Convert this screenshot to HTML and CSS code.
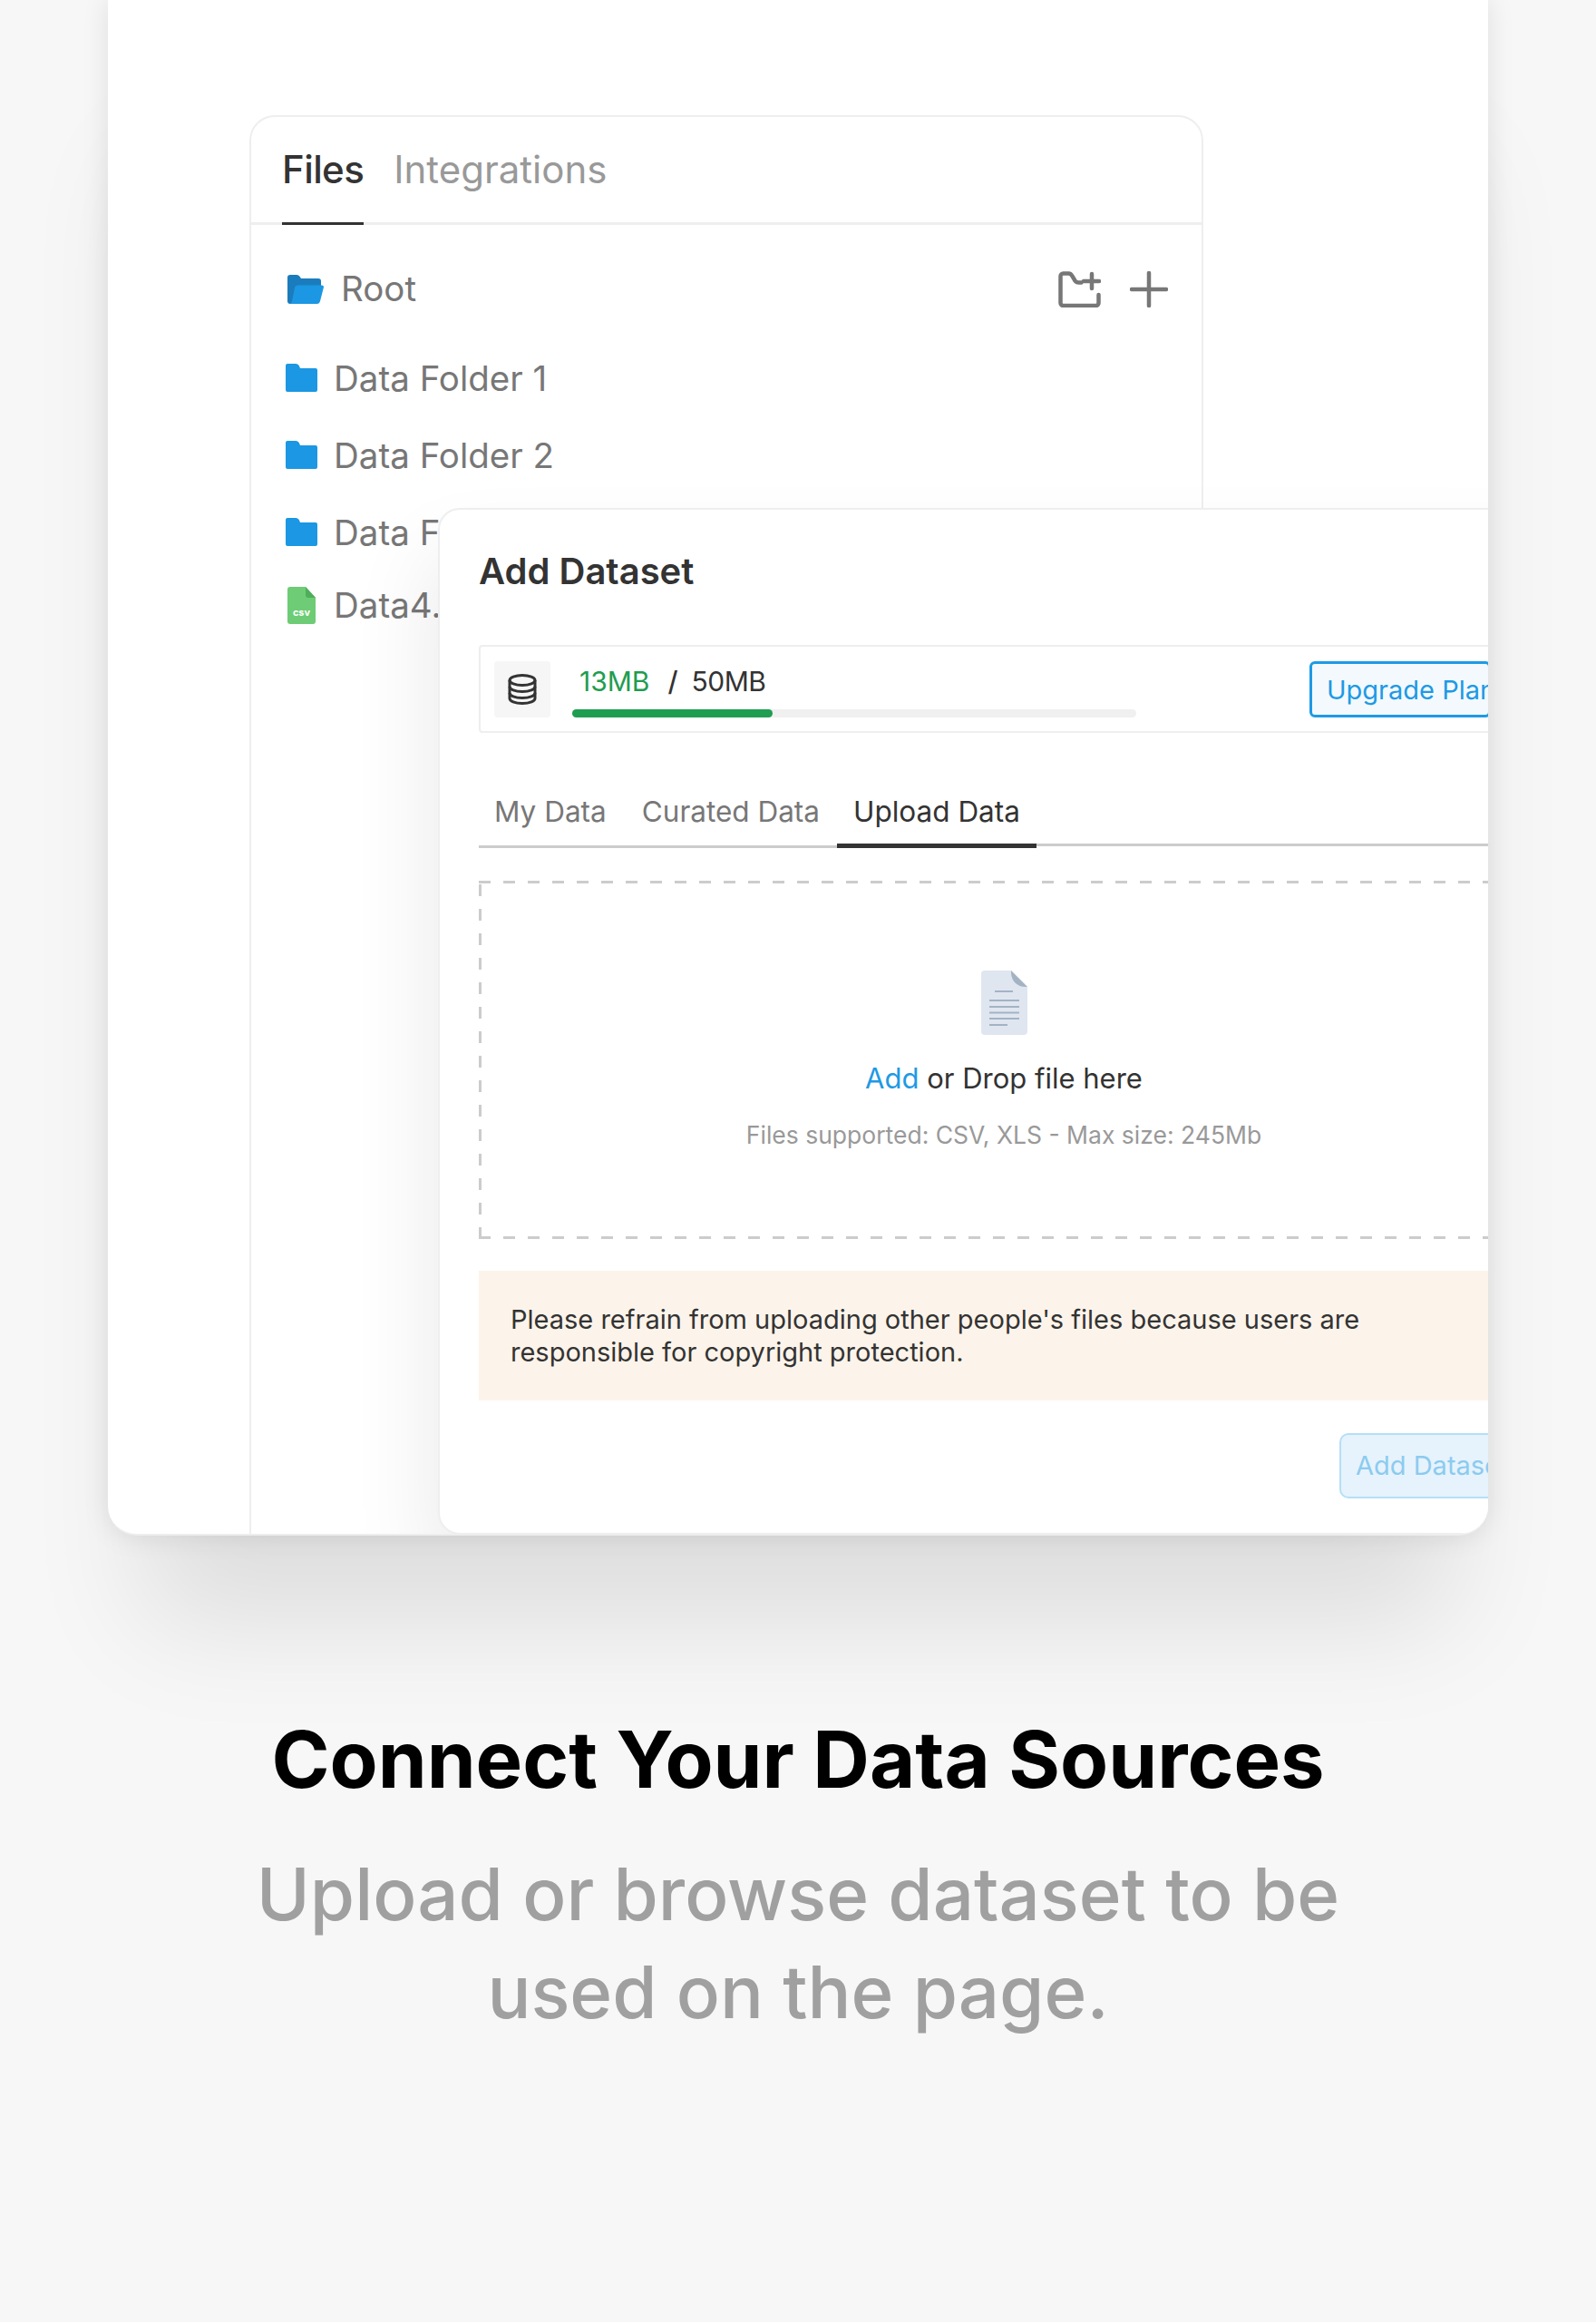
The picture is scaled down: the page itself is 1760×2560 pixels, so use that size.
FILE: index.html
```html
<!DOCTYPE html>
<html lang="en">
<head>
    <meta charset="UTF-8">
    <meta name="viewport" content="width=device-width, initial-scale=1.0">
    <title>Connect Your Data Sources</title>
    <link rel="stylesheet" href="styles.css">
</head>
<body>
    <div class="window">
        <div class="panel">
            <div class="panel-tabs">
                <div class="panel-tab active">Files</div>
                <div class="panel-tab">Integrations</div>
            </div>
            <div class="root-row">
                <svg class="root-icon" viewBox="0 0 40 32">
                    <path d="M0 3a3 3 0 0 1 3-3h7c2 0 3 1 4 2.500l1 1.500h19a3 3 0 0 1 3 3v5H13c-2 0-3 1-4 3L5 32H3a3 3 0 0 1-3-3z" fill="#1a7cbc"/>
                    <path d="M8 14c.5-1.500 1.500-2.500 3.500-2.500H38c1.500 0 2 1 2 2L36 29c-.5 2-1.500 3-3.500 3H2c1.500 0 2.500-1 3-3z" fill="#1b97e3"/>
                </svg>
                <span class="root-name">Root</span>
                <svg class="action-icon folder-add" viewBox="0 0 47 40">
                    <path d="M44.500 26v9a3 3 0 0 1-3 3H5.500a3 3 0 0 1-3-3V5.500a3 3 0 0 1 3-3h6c2 0 3 1 4 3l3 5c1 1.500 2 2 4 2h3" fill="none" stroke="#777" stroke-width="4.500" stroke-linecap="round"/>
                    <path d="M37 3v16M28 11h17" fill="none" stroke="#777" stroke-width="4.500" stroke-linecap="round"/>
                </svg>
                <svg class="action-icon plus" viewBox="0 0 42 40">
                    <path d="M21 2v36M2 20h38" fill="none" stroke="#777" stroke-width="4.500" stroke-linecap="round"/>
                </svg>
            </div>
            <div class="file-row">
                <svg class="folder-icon" viewBox="0 0 35 31"><path d="M0 2a2 2 0 0 1 2-2h9c2 0 3 1 4 2.500L16 5h17a2 2 0 0 1 2 2v22a2 2 0 0 1-2 2H2a2 2 0 0 1-2-2z" fill="#1b97e3"/></svg>
                <span>Data Folder 1</span>
            </div>
            <div class="file-row">
                <svg class="folder-icon" viewBox="0 0 35 31"><path d="M0 2a2 2 0 0 1 2-2h9c2 0 3 1 4 2.500L16 5h17a2 2 0 0 1 2 2v22a2 2 0 0 1-2 2H2a2 2 0 0 1-2-2z" fill="#1b97e3"/></svg>
                <span>Data Folder 2</span>
            </div>
            <div class="file-row">
                <svg class="folder-icon" viewBox="0 0 35 31"><path d="M0 2a2 2 0 0 1 2-2h9c2 0 3 1 4 2.500L16 5h17a2 2 0 0 1 2 2v22a2 2 0 0 1-2 2H2a2 2 0 0 1-2-2z" fill="#1b97e3"/></svg>
                <span>Data Folder 3</span>
            </div>
            <div class="file-row csv-row">
                <svg class="csv-icon" viewBox="0 0 31 41">
                    <path d="M3 0h17l11 12v26a3 3 0 0 1-3 3H3a3 3 0 0 1-3-3V3a3 3 0 0 1 3-3z" fill="#6dcc75"/>
                    <path d="M20 0l11 12H23a3 3 0 0 1-3-3z" fill="#4fae5a"/>
                    <text x="15.500" y="32" text-anchor="middle" class="csv-label">csv</text>
                </svg>
                <span>Data4.csv</span>
            </div>
        </div>

        <div class="dialog">
            <h2 class="dialog-title">Add Dataset</h2>
            <div class="storage">
                <div class="storage-icon">
                    <svg viewBox="0 0 32 34" width="32" height="34">
                        <g fill="none" stroke="#333" stroke-width="3">
                            <ellipse cx="16" cy="7" rx="14" ry="5.500"/>
                            <path d="M2 7v20c0 3 6 5.500 14 5.500s14-2.500 14-5.500V7"/>
                            <path d="M2 14c0 3 6 5.500 14 5.500s14-2.500 14-5.500M2 21c0 3 6 5.500 14 5.500s14-2.500 14-5.500"/>
                        </g>
                    </svg>
                </div>
                <div class="storage-info">
                    <div class="storage-text"><span class="used">13MB</span><span class="slash">/</span><span class="total">50MB</span></div>
                    <div class="track"><div class="fill" style="width: 35.5%"></div></div>
                </div>
                <div class="upgrade">Upgrade Plan</div>
            </div>
            <div class="tabs">
                <div class="tabs-left">
                    <div class="tab">My Data</div>
                    <div class="tab">Curated Data</div>
                </div>
                <div class="tab current">Upload Data</div>
                <div class="tabs-rest"></div>
            </div>
            <div class="dropzone">
                <svg class="doc-icon" viewBox="0 0 51 71">
                    <path d="M4 0h29l18 18v49a4 4 0 0 1-4 4H4a4 4 0 0 1-4-4V4a4 4 0 0 1 4-4z" fill="#e0e6f0"/>
                    <path d="M33 0l18 18-2 0c-9 0-16-6-16-16z" fill="#a3b3c4"/>
                    <path d="M15 23h20M9 33h33M9 40h33M9 46.500h33M9 53h33M9 60h20" stroke="#a3b3c4" stroke-width="2"/>
                </svg>
                <div class="drop-text"><span class="add-link">Add</span> or Drop file here</div>
                <div class="drop-hint">Files supported: CSV, XLS - Max size: 245Mb</div>
            </div>
            <div class="notice">Please refrain from uploading other people's files because users are<br>responsible for copyright protection.</div>
            <div class="dialog-foot">
                <div class="add-btn">Add Dataset</div>
            </div>
        </div>
    </div>

    <div class="caption">
        <h1>Connect Your Data Sources</h1>
        <p>Upload or browse dataset to be<br>used on the page.</p>
    </div>
</body>
</html>
```

FILE: styles.css
```css
* {
    box-sizing: border-box;
}
body {
    font-family: Inter, "Liberation Sans", sans-serif;
    background-color: #f7f7f7;
    margin: 0;
    height: 2560px;
    overflow: hidden;
}
.window {
    position: relative;
    height: 1693px;
    margin: 0 119px;
    padding: 127px 0 0 156px;
    background-color: #fff;
    border-bottom: 2px solid #eee;
    border-radius: 0 0 32px 32px;
    overflow: hidden;
    box-shadow: 0 136px 120px -40px rgba(0,0,0,0.1), 0 0 30px rgba(0,0,0,0.1);
}
.panel {
    width: 1052px;
    height: 1600px;
    border: 2px solid #eee;
    border-radius: 28px 28px 0 0;
}
.panel-tabs {
    display: flex;
    gap: 33px;
    height: 119px;
    padding-left: 34px;
    border-bottom: 3px solid #eee;
}
.panel-tab {
    height: 119px;
    padding-top: 33px;
    font-size: 42px;
    line-height: 50px;
    color: #999;
}
.panel-tab.active {
    color: #333;
    font-weight: 500;
    letter-spacing: -0.6px;
    border-bottom: 3px solid #333;
}
.root-row {
    display: flex;
    align-items: center;
    height: 40px;
    margin-top: 51px;
    padding: 0 37px 0 40px;
    font-size: 38.5px;
    color: #777;
}
.root-icon {
    width: 40px;
    height: 32px;
}
.root-name {
    margin-left: 19px;
    margin-right: auto;
    margin-bottom: 2px;
}
.action-icon {
    height: 40px;
}
.folder-add {
    width: 47px;
    margin-right: 32px;
}
.plus {
    width: 42px;
}
.file-row {
    display: flex;
    align-items: center;
    gap: 18px;
    height: 85px;
    padding-left: 38px;
    font-size: 38.5px;
    color: #777;
}
.file-row:nth-child(3) {
    margin-top: 35px;
}
.csv-row {
    height: 76px;
    padding-left: 40px;
}
.folder-icon {
    width: 35px;
    height: 31px;
}
.csv-icon {
    width: 31px;
    height: 41px;
    margin-right: 2px;
}
.csv-label {
    font-size: 11px;
    font-weight: 700;
    fill: #fff;
}
.dialog {
    position: absolute;
    left: 364px;
    top: 560px;
    width: 1244px;
    height: 1132px;
    padding: 0 43px;
    background-color: #fff;
    border: 2px solid #eee;
    border-radius: 24px;
    box-shadow: -10px 50px 90px rgba(0,0,0,0.08);
}
.dialog-title {
    margin: 44px 0 57px;
    font-size: 40px;
    line-height: 48px;
    font-weight: 600;
    color: #333;
}
.storage {
    display: flex;
    align-items: center;
    height: 97px;
    padding: 0 0 0 15px;
    border: 2px solid #eee;
    border-radius: 4px;
}
.storage-icon {
    display: flex;
    justify-content: center;
    align-items: center;
    width: 62px;
    height: 62px;
    background-color: #f6f6f6;
    border-radius: 4px;
}
.storage-info {
    width: 622px;
    margin-left: 24px;
    padding-top: 4px;
}
.storage-text {
    display: flex;
    gap: 20px;
    padding-left: 8px;
    font-size: 30px;
    line-height: 36px;
    color: #333;
}
.used {
    color: #1f9d50;
}
.slash {
    font-weight: 500;
}
.total {
    margin-left: -5px;
    letter-spacing: -0.5px;
}
.track {
    height: 9px;
    margin-top: 13px;
    background-color: #f0f0f0;
    border-radius: 5px;
}
.fill {
    height: 9px;
    background-color: #1f9d50;
    border-radius: 5px;
}
.upgrade {
    flex-shrink: 0;
    width: 200px;
    height: 62px;
    margin-left: 191px;
    padding-left: 16px;
    font-size: 29px;
    line-height: 58px;
    color: #1e9ae5;
    background-color: #f3f9fd;
    border: 3px solid #1e9ae5;
    border-radius: 6px;
    white-space: nowrap;
}
.tabs {
    display: flex;
    align-items: flex-end;
    height: 77px;
    margin-top: 50px;
    font-size: 31.5px;
    line-height: 38px;
    color: #777;
}
.tabs-left {
    display: flex;
    gap: 3px;
    width: 395px;
    height: 77px;
    padding-left: 17px;
    border-bottom: 3px solid #ccc;
}
.tab {
    padding: 18px 18px 0;
    white-space: nowrap;
}
.tabs-left .tab {
    padding-left: 0;
}
.tabs-left .tab + .tab {
    padding-left: 18px;
}
.tab.current {
    width: 220px;
    height: 77px;
    color: #333;
    border-bottom: 5px solid #333;
}
.tabs-rest {
    flex: 1;
    margin-bottom: 2px;
    border-bottom: 3px solid #ccc;
}
.dropzone {
    display: flex;
    flex-direction: column;
    align-items: center;
    width: 1158px;
    height: 395px;
    margin-top: 36px;
    padding-top: 99px;
    background:
        repeating-linear-gradient(90deg, #ccc 0 13px, transparent 13px 27px) top / 100% 3px no-repeat,
        repeating-linear-gradient(90deg, #ccc 0 13px, transparent 13px 27px) bottom / 100% 3px no-repeat,
        repeating-linear-gradient(0deg, #ccc 0 13px, transparent 13px 27px) left / 3px 100% no-repeat,
        repeating-linear-gradient(0deg, #ccc 0 13px, transparent 13px 27px) right / 3px 100% no-repeat;
}
.doc-icon {
    width: 51px;
    height: 71px;
}
.drop-text {
    margin-top: 29px;
    font-size: 31px;
    line-height: 38px;
    color: #333;
}
.add-link {
    color: #1e9ae5;
}
.drop-hint {
    margin-top: 27px;
    font-size: 26.5px;
    line-height: 32px;
    color: #999;
}
.notice {
    height: 143px;
    margin-top: 35px;
    padding: 36px 35px 0;
    background-color: #fcf4ea;
    font-size: 29px;
    line-height: 36px;
    color: #333;
    white-space: nowrap;
}
.dialog-foot {
    display: flex;
    justify-content: flex-end;
    margin-top: 36px;
}
.add-btn {
    width: 205px;
    height: 72px;
    padding-left: 16px;
    font-size: 29px;
    line-height: 68px;
    color: #8ccbf0;
    background-color: #e6f3fc;
    border: 2px solid #b5dff7;
    border-radius: 10px;
    white-space: nowrap;
}
.caption {
    margin-top: 197px;
    text-align: center;
}
.caption h1 {
    margin: 0;
    font-size: 86.7px;
    line-height: 100px;
    font-weight: 700;
    color: #000;
}
.caption p {
    margin: 44px 0 0;
    font-size: 79.8px;
    line-height: 108px;
    font-weight: 500;
    color: #a0a0a0;
}
```
